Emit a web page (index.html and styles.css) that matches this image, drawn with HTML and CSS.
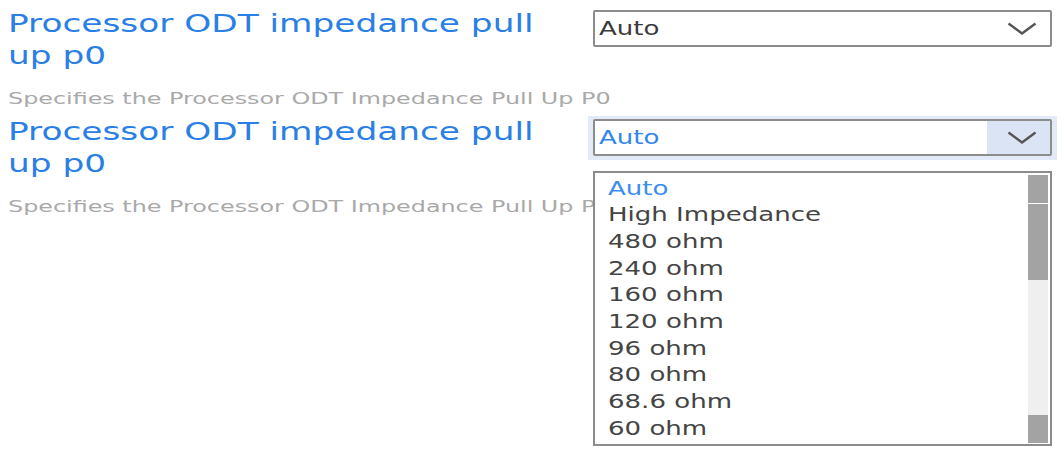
FILE: index.html
```html
<!DOCTYPE html>
<html lang="en">
<head>
  <meta charset="UTF-8" />
  <meta name="viewport" content="width=device-width, initial-scale=1.0" />
  <title>Memory Settings</title>
  <link rel="stylesheet" href="styles.css">
</head>
<body>
  <div class="setting">
    <div class="setting-head">
      <div class="setting-label">
        <h2 class="setting-title">Processor ODT impedance pull up p0</h2>
      </div>
      <div class="select-wrap">
        <div class="select">
          <span class="select-value"><span class="wide">Auto</span></span>
          <span class="select-arrow">
            <svg width="30" height="13" viewBox="0 0 30 13"><polyline points="1.5,1.5 15,11.5 28.5,1.5" /></svg>
          </span>
        </div>
      </div>
    </div>
    <p class="setting-desc">Specifies the Processor ODT Impedance Pull Up P0</p>
  </div>

  <div class="setting">
    <div class="setting-head">
      <div class="setting-label">
        <h2 class="setting-title">Processor ODT impedance pull up p0</h2>
      </div>
      <div class="select-wrap is-open">
        <div class="select">
          <span class="select-value"><span class="wide">Auto</span></span>
          <span class="select-arrow">
            <svg width="30" height="13" viewBox="0 0 30 13"><polyline points="1.5,1.5 15,11.5 28.5,1.5" /></svg>
          </span>
        </div>
        <div class="options">
          <ul class="option-list">
            <li class="is-selected"><span class="wide">Auto</span></li>
            <li><span class="wide">High Impedance</span></li>
            <li><span class="wide">480 ohm</span></li>
            <li><span class="wide">240 ohm</span></li>
            <li><span class="wide">160 ohm</span></li>
            <li><span class="wide">120 ohm</span></li>
            <li><span class="wide">96 ohm</span></li>
            <li><span class="wide">80 ohm</span></li>
            <li><span class="wide">68.6 ohm</span></li>
            <li><span class="wide">60 ohm</span></li>
          </ul>
          <div class="scrollbar">
            <div class="scroll-btn"></div>
            <div class="scroll-thumb"></div>
            <div class="scroll-track"></div>
            <div class="scroll-btn"></div>
          </div>
        </div>
      </div>
    </div>
    <p class="setting-desc">Specifies the Processor ODT Impedance Pull Up P0</p>
  </div>
</body>
</html>
```

FILE: styles.css
```css
body {
  margin: 0;
  padding: 8px 6px 0 8px;
  min-height: 100vh;
  box-sizing: border-box;
  font-family: "DejaVu Sans", sans-serif;
  background: #fff;
  overflow: hidden;
}
/* the panel is rendered with a wide (stretched) face */
.wide {
  display: inline-block;
  transform: scaleX(1.37);
  transform-origin: 0 50%;
}
.setting + .setting {
  margin-top: 7px;
}
.setting-head {
  display: flex;
  align-items: flex-start;
}
.setting-label {
  flex: 0 0 580px;
}
.setting-title {
  width: 400px;
  margin: 0;
  font-size: 24px;
  line-height: 32px;
  font-weight: normal;
  color: #2a7fe6;
  transform: scaleX(1.43);
  transform-origin: 0 0;
}
.setting-desc {
  width: fit-content;
  margin: 17px 0 0;
  font-size: 16px;
  line-height: 20px;
  color: #a9a9a9;
  white-space: nowrap;
  transform: scaleX(1.49);
  transform-origin: 0 0;
}
.select-wrap {
  position: relative;
  flex: 0 0 469px;
  box-sizing: border-box;
  padding: 2px 5px 5px;
}
.select {
  display: flex;
  height: 37px;
  box-sizing: border-box;
  border: 2px solid #8c8c8c;
  border-radius: 2px;
  background: #fff;
}
.select-value {
  flex: 1;
  padding-left: 4px;
  font-size: 19px;
  line-height: 33px;
  color: #3a3a3a;
}
.select-arrow {
  width: 63px;
  box-sizing: border-box;
  padding-right: 13px;
  display: flex;
  align-items: center;
  justify-content: flex-end;
}
.select-arrow polyline {
  fill: none;
  stroke: #555;
  stroke-width: 2.4;
}
.is-open {
  padding-top: 3px;
  padding-bottom: 4px;
  background: #e2e9f7;
}
.is-open .select-value {
  color: #2f86ee;
}
.is-open .select-arrow {
  background: #dbe4f5;
}
.options {
  position: absolute;
  top: 55px;
  left: 5px;
  z-index: 1;
  display: flex;
  width: 459px;
  height: 275px;
  box-sizing: border-box;
  border: 2px solid #8c8c8c;
  background: #fff;
}
.option-list {
  flex: 1;
  margin: 0;
  padding: 1.5px 0 0;
  list-style: none;
}
.option-list li {
  padding-left: 13px;
  font-size: 19px;
  line-height: 26.7px;
  color: #444;
  white-space: nowrap;
}
.option-list li.is-selected {
  color: #3a8df0;
}
.scrollbar {
  display: flex;
  flex-direction: column;
  width: 20px;
  margin: 2px 2px 1px 0;
  background: #efefef;
}
.scroll-btn {
  height: 28px;
  background: #a3a3a3;
}
.scroll-thumb {
  height: 76px;
  border-top: 1px solid #fff;
  background: #a3a3a3;
}
.scroll-track {
  flex: 1;
}
```
